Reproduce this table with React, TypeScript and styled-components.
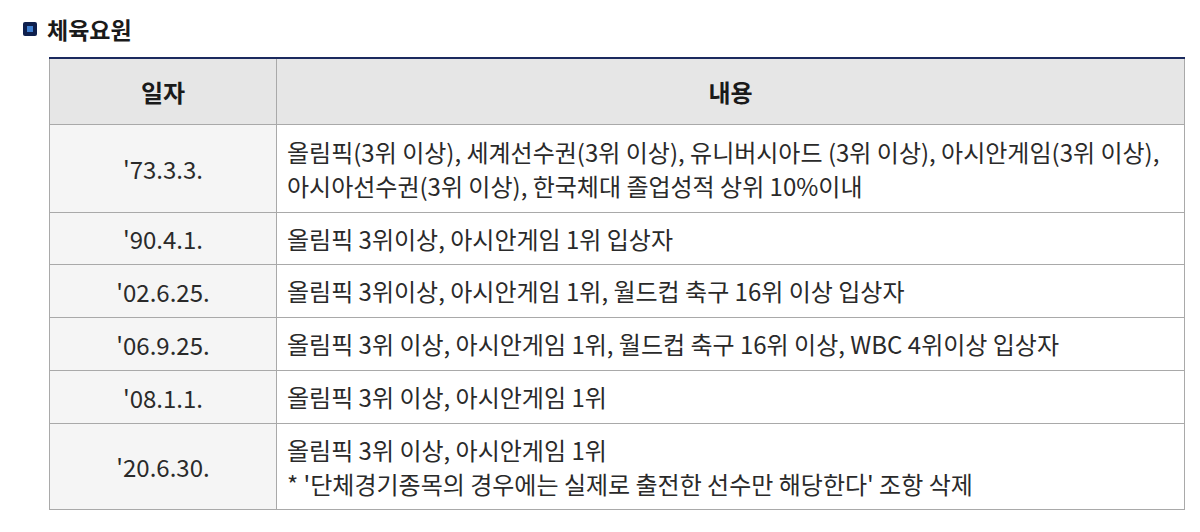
import styled, { createGlobalStyle } from "styled-components";

const GlobalStyle = createGlobalStyle`
  html, body {
    margin: 0;
    padding: 0;
    background: #ffffff;
  }
  body {
    font-family: "Noto Sans CJK KR", "Noto Sans", sans-serif;
    color: #222;
  }
`;

type Row = { date: string; lines: string[]; height: number };

const rows: Row[] = [
  {
    date: "'73.3.3.",
    lines: [
      "올림픽(3위 이상), 세계선수권(3위 이상), 유니버시아드 (3위 이상), 아시안게임(3위 이상),",
      "아시아선수권(3위 이상), 한국체대 졸업성적 상위 10%이내",
    ],
    height: 88,
  },
  { date: "'90.4.1.", lines: ["올림픽 3위이상, 아시안게임 1위 입상자"], height: 52 },
  {
    date: "'02.6.25.",
    lines: ["올림픽 3위이상, 아시안게임 1위, 월드컵 축구 16위 이상 입상자"],
    height: 53,
  },
  {
    date: "'06.9.25.",
    lines: ["올림픽 3위 이상, 아시안게임 1위, 월드컵 축구 16위 이상, WBC 4위이상 입상자"],
    height: 53,
  },
  { date: "'08.1.1.", lines: ["올림픽 3위 이상, 아시안게임 1위"], height: 53 },
  {
    date: "'20.6.30.",
    lines: [
      "올림픽 3위 이상, 아시안게임 1위",
      "* '단체경기종목의 경우에는 실제로 출전한 선수만 해당한다' 조항 삭제",
    ],
    height: 86,
  },
];

export default function App() {
  return (
    <Page>
      <GlobalStyle />
      <Title>
        <Bullet />
        체육요원
      </Title>
      <Table>
        <colgroup>
          <col style={{ width: 227 }} />
          <col />
        </colgroup>
        <thead>
          <tr>
            <HeadCell>일자</HeadCell>
            <HeadCell>내용</HeadCell>
          </tr>
        </thead>
        <tbody>
          {rows.map((r) => (
            <BodyRow key={r.date} $h={r.height}>
              <DateCell>{r.date}</DateCell>
              <TextCell>
                {r.lines.map((l) => (
                  <Line key={l}>{l}</Line>
                ))}
              </TextCell>
            </BodyRow>
          ))}
        </tbody>
      </Table>
    </Page>
  );
}

const Page = styled.div`
  padding: 14px 15px 0 49px;
  width: 1200px;
  box-sizing: border-box;
`;

const Title = styled.h2`
  margin: 0 0 13px -26px;
  display: flex;
  align-items: center;
  gap: 10px;
  font-size: 23px;
  font-weight: 700;
  line-height: 30px;
  color: #1a1a1a;
`;

const Bullet = styled.span`
  width: 14px;
  height: 14px;
  background: #0e1f4d;
  border-radius: 2px;
  display: flex;
  align-items: center;
  justify-content: center;

  &::after {
    content: "";
    width: 6px;
    height: 6px;
    background: #3f7fd0;
  }
`;

const Table = styled.table`
  width: 1136px;
  border-collapse: collapse;
  table-layout: fixed;
  border-top: 2px solid #1b2a5e;
  font-size: 24px;
`;

const HeadCell = styled.th`
  height: 65px;
  background: #e6e6e6;
  border: 1px solid #a9a9a9;
  border-top: none;
  font-weight: 700;
  font-size: 24px;
  color: #1a1a1a;
  text-align: center;
  vertical-align: middle;
  padding: 0;
`;

const BodyRow = styled.tr<{ $h: number }>`
  height: ${(p) => p.$h}px;
`;

const DateCell = styled.td`
  background: #f5f5f5;
  border: 1px solid #a9a9a9;
  text-align: center;
  vertical-align: middle;
  color: #2a2a2a;
  padding: 0;
`;

const TextCell = styled.td`
  background: #ffffff;
  border: 1px solid #a9a9a9;
  vertical-align: middle;
  padding: 0 10px;
  color: #2a2a2a;
`;

const Line = styled.div`
  line-height: 34px;
  white-space: nowrap;
`;
